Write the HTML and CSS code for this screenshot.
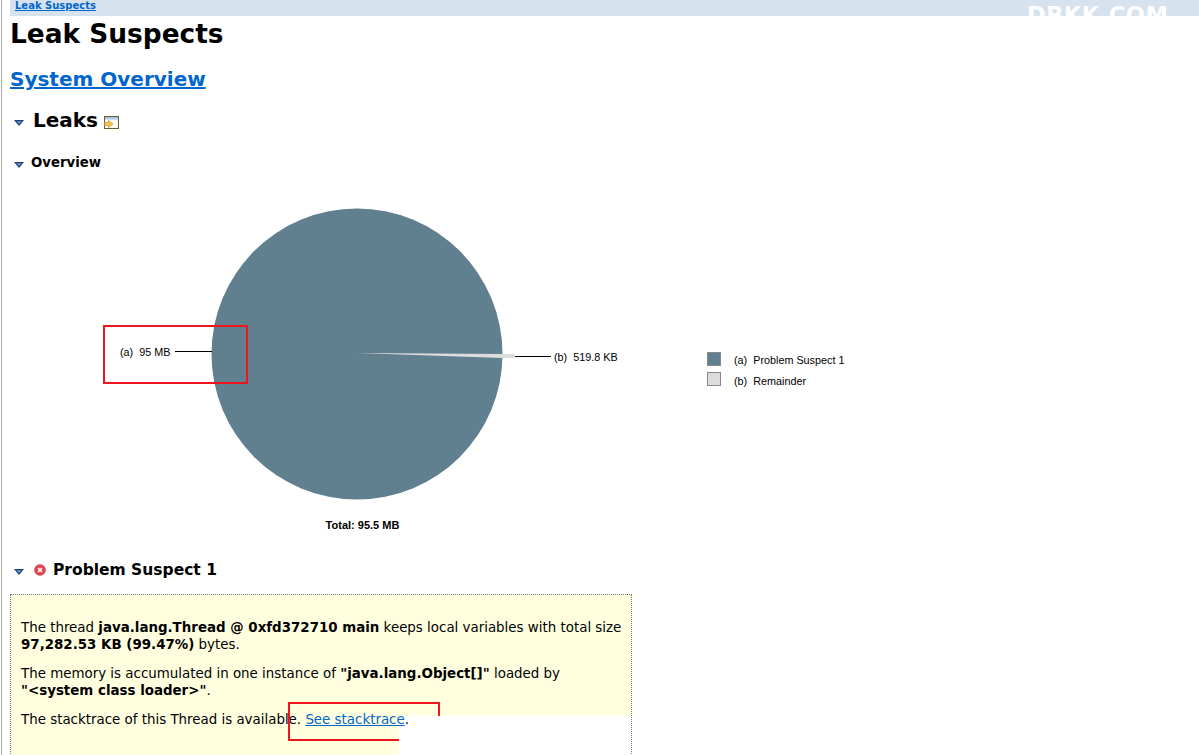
FILE: index.html
```html
<!DOCTYPE html>
<html lang="en">
<head>
<meta charset="utf-8">
<title>Leak Suspects</title>
<link rel="stylesheet" href="styles.css">
</head>
<body>
<div class="page">
  <div class="crumbs"><a href="#">Leak Suspects</a><span class="mark">DBKK.COM</span></div>
  <h1>Leak Suspects</h1>
  <h2><a href="#">System Overview</a></h2>
  <h3 class="section">
    <svg class="twisty" viewBox="0 0 10 6"><path d="M0 0H10L5 6Z" fill="#1d3f80"/><path d="M2.500 1.200H7.500L5 4Z" fill="#6f97cf"/></svg>
    <span>Leaks</span>
    <svg class="tool" viewBox="0 0 15 13"><rect x=".5" y=".5" width="14" height="12" fill="#fdfaf0" stroke="#6b5a3a"/><rect x="1" y="1" width="13" height="2.500" fill="#a8c8ea"/><path d="M.5 6.500H4.500V4.500L9 8 4.500 11.500V9.500H.5Z" fill="#f4c450" stroke="#b88420" stroke-width=".6"/></svg>
  </h3>
  <h4 class="sub">
    <svg class="twisty twisty-sub" viewBox="0 0 10 6"><path d="M0 0H10L5 6Z" fill="#1d3f80"/><path d="M2.500 1.200H7.500L5 4Z" fill="#6f97cf"/></svg>
    <span>Overview</span>
  </h4>
  <svg class="chart" viewBox="0 0 1197 345" width="1197" height="345">
    <circle cx="355" cy="164" r="145.500" fill="#607f8f"/>
    <path d="M355 163 500 164H513V168H500Z" fill="#dcdcdc"/>
    <path d="M173 161.500H210M513 166.500H549" stroke="#000" stroke-width="1" fill="none"/>
    <text class="lbl" x="118" y="166">(a)&#160; 95 MB</text>
    <text class="lbl" x="552" y="171">(b)&#160; 519.8 KB</text>
    <rect x="705.500" y="162.500" width="13" height="13" fill="#607f8f" stroke="#888"/>
    <rect x="705.500" y="182.500" width="13" height="13" fill="#dcdcdc" stroke="#888"/>
    <text class="lbl" x="732" y="174">(a)&#160; Problem Suspect 1</text>
    <text class="lbl" x="732" y="195">(b)&#160; Remainder</text>
    <text class="total" x="360.500" y="339" text-anchor="middle">Total: 95.5 MB</text>
  </svg>
  <h3 class="suspect">
    <svg class="twisty twisty-sub" viewBox="0 0 10 6"><path d="M0 0H10L5 6Z" fill="#1d3f80"/><path d="M2.500 1.200H7.500L5 4Z" fill="#6f97cf"/></svg>
    <svg class="err" viewBox="0 0 12 12"><circle cx="6" cy="6" r="5.800" fill="#e04050"/><path d="M4 4 8 8M8 4 4 8" stroke="#ffe4e4" stroke-width="1.800"/></svg>
    <span>Problem Suspect 1</span>
  </h3>
  <div class="box">
    <p>The thread <b>java.lang.Thread @ 0xfd372710 main</b> keeps local variables with total size <b>97,282.53 KB (99.47%)</b> bytes.</p>
    <p>The memory is accumulated in one instance of <b>"java.lang.Object[]"</b> loaded by <b>"&lt;system class loader&gt;"</b>.</p>
    <p>The stacktrace of this Thread is available. <span class="over"><a href="#">See stacktrace</a>.</span></p>
  </div>
</div>
<div class="redmark mark-a"></div>
<div class="redmark mark-b"></div>
<div class="patch"></div>
</body>
</html>
```
FILE: styles.css
```css
html, body { margin: 0; padding: 0; background: #fff; height: 755px; overflow: hidden; }
body { position: relative; font-family: "DejaVu Sans", Verdana, sans-serif; color: #000; }
.page { margin-left: 1px; border-left: 1px solid #a9a9a9; height: 755px; overflow: hidden; box-sizing: border-box; padding-left: 8px; }
a { color: #0066cc; }
.crumbs { height: 16px; background: #d6e3ef; padding-left: 5px; font-size: 10px; font-weight: bold; line-height: 12px; position: relative; overflow: hidden; }
.mark { position: absolute; left: 1017px; top: 3px; font-size: 22.500px; line-height: 25px; color: #fff; font-weight: bold; letter-spacing: .5px; }
h1 { margin: 0; font-size: 26.400px; line-height: 36px; height: 36px; }
h2 { margin: 14px 0 0; font-size: 20px; line-height: 26px; }
h3, h4 { margin: 0; display: flex; align-items: center; }
.section { margin-top: 15px; font-size: 20px; line-height: 26px; }
.section span { margin-left: 9px; }
.twisty { width: 10px; height: 6px; margin-left: 4px; flex: none; position: relative; top: 3px; }
.twisty-sub { top: 2px; }
.tool { width: 15px; height: 13px; margin-left: 6px; position: relative; top: 2px; }
.sub { margin-top: 22px; font-size: 13.300px; line-height: 16px; }
.sub span { margin-left: 7px; }
.chart { display: block; margin: 19px 0 0 -8px; }
.lbl { font: 10.800px "Liberation Sans", Arial, sans-serif; fill: #000; }
.total { font: bold 11px "Liberation Sans", Arial, sans-serif; fill: #000; }
.suspect { margin-top: 25px; font-size: 15.500px; line-height: 20px; }
.err { width: 12px; height: 12px; margin-left: 10px; }
.suspect span { margin-left: 7px; }
.box { margin-top: 14px; width: 622px; height: 200px; background: #ffffe0; border: 1px dotted #777; font-size: 13.400px; line-height: 17px; padding: 24px 6px 0 10px; box-sizing: border-box; }
.box p { margin: 0 0 12px; }
.box b { white-space: nowrap; }
.over { position: relative; z-index: 2; }
.redmark { position: absolute; border: 2px solid #f0141c; box-sizing: border-box; }
.mark-a { left: 103px; top: 325px; width: 145px; height: 59px; }
.mark-b { left: 288px; top: 702px; width: 152px; height: 39px; }
.patch { position: absolute; z-index: 1; left: 399px; top: 716px; width: 232px; height: 39px; background: #fff; }
```
